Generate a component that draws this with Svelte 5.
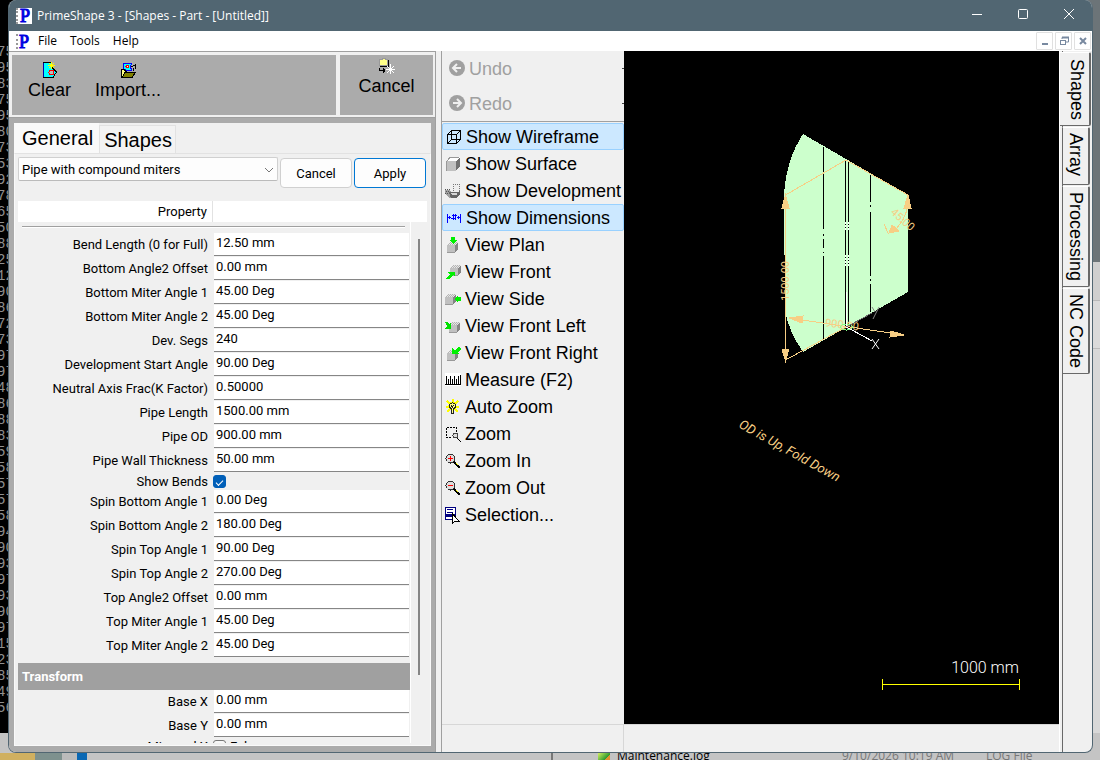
<script>
    const consoleLines = [
        "75", "95", "83", "75", "95", "80", "73", "53", "92", "78", "65", "50", "88", "25",
        "12", "90", "86", "72", "73", "97", "97", "48", "86", "88", "83", "59", "58", "57",
        "57", "58", "94", "90", "93", "97", "93", "90", "97", "15", "23", "85", "49", "56",
    ];

    let shapeRows = $state([
        { label: "Bend Length (0 for Full)", value: "12.50 mm" },
        { label: "Bottom Angle2 Offset", value: "0.00 mm" },
        { label: "Bottom Miter Angle 1", value: "45.00 Deg" },
        { label: "Bottom Miter Angle 2", value: "45.00 Deg" },
        { label: "Dev. Segs", value: "240" },
        { label: "Development Start Angle", value: "90.00 Deg" },
        { label: "Neutral Axis Frac(K Factor)", value: "0.50000" },
        { label: "Pipe Length", value: "1500.00 mm" },
        { label: "Pipe OD", value: "900.00 mm" },
        { label: "Pipe Wall Thickness", value: "50.00 mm" },
        { label: "Show Bends", checked: true },
        { label: "Spin Bottom Angle 1", value: "0.00 Deg" },
        { label: "Spin Bottom Angle 2", value: "180.00 Deg" },
        { label: "Spin Top Angle 1", value: "90.00 Deg" },
        { label: "Spin Top Angle 2", value: "270.00 Deg" },
        { label: "Top Angle2 Offset", value: "0.00 mm" },
        { label: "Top Miter Angle 1", value: "45.00 Deg" },
        { label: "Top Miter Angle 2", value: "45.00 Deg" },
    ]);

    let transformRows = $state([
        { label: "Base X", value: "0.00 mm" },
        { label: "Base Y", value: "0.00 mm" },
        { label: "Mirrored X", checked: false, text: "False" },
    ]);

    let viewItems = $state([
        { icon: "wire", label: "Show Wireframe", on: true },
        { icon: "surface", label: "Show Surface" },
        { icon: "develop", label: "Show Development" },
        { icon: "dims", label: "Show Dimensions", on: true },
        { icon: "plan", label: "View Plan" },
        { icon: "front", label: "View Front" },
        { icon: "side", label: "View Side" },
        { icon: "frontleft", label: "View Front Left" },
        { icon: "frontright", label: "View Front Right" },
        { icon: "measure", label: "Measure (F2)" },
        { icon: "bulb", label: "Auto Zoom" },
        { icon: "zoom", label: "Zoom" },
        { icon: "zoomin", label: "Zoom In" },
        { icon: "zoomout", label: "Zoom Out" },
        { icon: "select", label: "Selection..." },
    ]);

    const sideTabs = ["Shapes", "Array", "Processing", "NC Code"];
    let sideTab = $state("Shapes");
    let pageTab = $state("General");
</script>

{#snippet cube(x, y)}
    <g transform="translate({x} {y})">
        <path d="M0 3L3 0H11L8 3Z" fill="#e6e6e6" />
        <path d="M1 2.5H9M2 1.5H10M3 .5H11" stroke="#b4b4b4" stroke-dasharray="1 1" />
        <path d="M0 3H8V10H0Z" fill="#c0c0c0" />
        <path d="M8 3L11 0V7L8 10Z" fill="#848484" />
        <path d="M0 10.5H8" stroke="#9a9a9a" />
    </g>
{/snippet}

{#snippet lens(sign)}
    <path d="M9 9L15 15" stroke="#000" stroke-width="2" />
    <path d="M11 10L13 12" stroke="#ff0" />
    <circle cx="5.5" cy="5.5" r="4.5" fill="#ddd" stroke="#333" />
    <path d="M3 5.5H8" stroke="#f00" />
    {#if sign === "+"}<path d="M5.5 3V8" stroke="#f00" />{/if}
{/snippet}

{#snippet icon(name)}
    <svg class="icon" viewBox="0 0 16 16" shape-rendering="crispEdges" aria-hidden="true">
        {#if name === "wire"}
            <path
                d="M1.5 5.5H10.5V14.5H1.5ZM5.5 1.5H14.5V10.5H5.5ZM1.5 5.5L5.5 1.5M10.5 5.5L14.5 1.5M1.5 14.5L5.5 10.5M10.5 14.5L14.5 10.5"
                fill="none"
                stroke="#000"
            />
        {:else if name === "surface"}
            <path d="M1 5L5 1H15L11 5Z" fill="#fff" />
            <path d="M1 5H11V15H1Z" fill="#c0c0c0" />
            <path d="M11 5L15 1V10L11 15Z" fill="#707070" />
            <path d="M1.5 15V5.5L5 1.5H14" fill="none" stroke="#999" />
        {:else if name === "develop"}
            <path d="M8.5 8V1.5H14.5V8" fill="#eee" stroke="#777" stroke-dasharray="1 1" />
            <path d="M0 7H4L6 9H9V13L7 15H5L0 11Z" fill="#a0a0a0" />
            <path d="M4 9H13L15 7V11L11 15H6Z" fill="#666" />
            <path d="M5 10H12V12H7Z" fill="#d8d8d8" />
            <path d="M0 6.5H5M1 8.5H5M0 10.5H4" stroke="#555" stroke-dasharray="1 1" />
        {:else if name === "dims"}
            <path
                d="M1.5 4V13M14.5 4V13M2 7.5H5M11 7.5H14M3.5 6V9M12.5 6V9M6 5.5H11M5 8.5H10M7.5 4V10M9.5 4V10"
                stroke="#00f"
                fill="none"
            />
        {:else if name === "plan"}
            {@render cube(2, 5)}
            <path d="M6 0H10V3H12L8 7L4 3H6Z" fill="#00f000" />
        {:else if name === "front"}
            {@render cube(5, 1)}
            <path d="M2 8H10V13L8 11L4 15H0L5 10Z" fill="#00f000" />
        {:else if name === "side"}
            {@render cube(0, 3)}
            <path d="M9 8L13 4V6H16V10H13V12Z" fill="#00f000" />
        {:else if name === "frontleft"}
            {@render cube(4, 4)}
            <path d="M0 4H2L4 6L6 4V11H0L2 8Z" fill="#00e000" />
        {:else if name === "frontright"}
            {@render cube(2, 5)}
            <path d="M15 2L16 4L13 7L14 9H7V3L10 5L13 2Z" fill="#00f000" />
        {:else if name === "measure"}
            <path d="M0 1H16V14H0Z" fill="#fff" />
            <path
                d="M0 12.5H16M1.5 4V12M3.5 7V12M5.5 4V12M7.5 7V12M9.5 4V12M11.5 7V12M13.5 4V12M15.5 3V12"
                stroke="#000"
            />
        {:else if name === "bulb"}
            <path
                d="M7.5 0V14M1 7.5H14M2 2L13 13M13 2L2 13"
                stroke="#ff0"
                stroke-width="2"
            />
            <circle cx="7.5" cy="6.5" r="4" fill="#ff0" />
            <path d="M7.5 3.5L10.5 5.5V8L8.5 10V14H6.5V10L4.5 8V5.5Z" fill="#ff8" stroke="#222" />
            <path d="M6 6L7.5 8L9 6" fill="none" stroke="#222" />
        {:else if name === "zoom"}
            <path
                d="M1.5 1.5H11.5V7M1.5 1.5V11.5H7"
                fill="none"
                stroke="#000"
                stroke-dasharray="2 1"
            />
            <circle cx="10.5" cy="9.5" r="2.5" fill="#ddd" stroke="#444" />
            <path d="M12 12L16 16" stroke="#000" />
        {:else if name === "zoomin"}
            {@render lens("+")}
        {:else if name === "zoomout"}
            {@render lens("-")}
        {:else if name === "select"}
            <path d="M.5 .5H10.5V12.5H.5Z" fill="#fff" stroke="#000080" />
            <path d="M2 2.5H8M2 5.5H8" stroke="#000080" />
            <path d="M1 7H10V10H1Z" fill="#000080" />
            <path d="M7.5 7L14.5 14.5H10L7.5 16Z" fill="#fff" stroke="#000" />
        {/if}
    </svg>
{/snippet}

{#snippet field(row, id)}
    <div class="row" class:check-row={row.value === undefined}>
        <label for={id}>{row.label}</label>
        {#if row.value === undefined}
            <div class="check-cell">
                <input {id} type="checkbox" bind:checked={row.checked} />
                {#if row.text}<span>{row.text}</span>{/if}
            </div>
        {:else}
            <input {id} type="text" bind:value={row.value} />
        {/if}
    </div>
{/snippet}

<div class="desktop">
    <div class="console" aria-hidden="true">
        {#each consoleLines as line}<div>{line}</div>{/each}
    </div>
    <div class="backdrop"></div>
    <div class="explorer">
        <span class="thumbs"></span>
        <span class="splitter"></span>
        <span class="file-icon"></span>
        <span class="file-name">Maintenance.log</span>
        <span class="file-date">9/10/2026 10:19 AM</span>
        <span class="file-kind">LOG File</span>
    </div>

    <div class="window">
        <header class="titlebar">
            <span class="logo">P</span>
            <h1>PrimeShape 3 - [Shapes - Part - [Untitled]]</h1>
            <button aria-label="Minimize">
                <svg viewBox="0 0 12 12"><path d="M1 6.5H11" /></svg>
            </button>
            <button aria-label="Maximize">
                <svg viewBox="0 0 12 12"><rect x="1.5" y="1.5" width="9" height="9" rx="1" /></svg>
            </button>
            <button aria-label="Close">
                <svg viewBox="0 0 12 12"><path d="M1 1L11 11M11 1L1 11" /></svg>
            </button>
        </header>

        <nav class="menubar">
            <span class="logo">P</span>
            <button>File</button>
            <button>Tools</button>
            <button>Help</button>
            <div class="mdi">
                <button aria-label="Minimize document">
                    <svg viewBox="0 0 12 12"><path d="M3 9H9" stroke-width="2" /></svg>
                </button>
                <button aria-label="Restore document">
                    <svg viewBox="0 0 12 12">
                        <path d="M4 4V2.5H10.5V7H8" />
                        <path d="M4 2.5H11" stroke-width="2" />
                        <rect x="2.5" y="5.5" width="5" height="4" />
                    </svg>
                </button>
                <button aria-label="Close document">
                    <svg viewBox="0 0 12 12"><path d="M3 3L9 9M9 3L3 9" stroke-width="2" /></svg>
                </button>
            </div>
        </nav>

        <main>
            <section class="editor">
                <div class="actions">
                    <div class="action-group wide">
                        <button>
                            <svg class="icon" viewBox="0 0 16 16" shape-rendering="crispEdges" aria-hidden="true">
                                <path d="M1.5 .5H9.5V5L14.5 10L11 15.5H1.5Z" fill="#0ff" stroke="#000" />
                                <path d="M1.5 1V15" stroke="#00a" />
                                <path d="M9.5 0V7M6 3.5H13M7 1L12 6M12 1L7 6" stroke="#ff0" />
                                <circle cx="9.5" cy="10.5" r="2.5" fill="#bbb" stroke="#f00" />
                            </svg>
                            <span>Clear</span>
                        </button>
                        <button>
                            <svg class="icon" viewBox="0 0 16 16" shape-rendering="crispEdges" aria-hidden="true">
                                <path d="M3 1H12L10 5L12 8L8 9L4 7Z" fill="#0ff" stroke="#00f" />
                                <circle cx="7.5" cy="4.5" r="1.5" fill="#fff" stroke="#f00" />
                                <path d="M11 5L15 3V7M13 9V6" fill="none" stroke="#000" />
                                <path d="M1.5 15V7.5H4L7 10.5H12V15Z" fill="#ff8" stroke="#000" />
                                <path d="M2 15.5L5 10.5H15.5L12 15.5Z" fill="#808000" stroke="#000" />
                            </svg>
                            <span>Import...</span>
                        </button>
                    </div>
                    <div class="action-group">
                        <button>
                            <svg class="icon" viewBox="0 0 16 16" shape-rendering="crispEdges" aria-hidden="true">
                                <path d="M.5 1.5H3.5V.5H6.5V1.5H8.5V7.5H.5Z" fill="#ff8" stroke="#999" />
                                <path d="M9.5 2V8.5H1" fill="none" stroke="#000" />
                                <path d="M.5 10V12.5H4M4.5 10V15M5.5 11V14" fill="none" stroke="#000" />
                                <path d="M11.5 6V16M7 11.5H16M8 8L15 15M15 8L8 15" stroke="#fff" />
                            </svg>
                            <span>Cancel</span>
                        </button>
                    </div>
                </div>

                <div class="frame">
                    <div class="page-tabs" role="tablist">
                        {#each ["General", "Shapes"] as tab}
                            <button
                                role="tab"
                                aria-selected={pageTab === tab}
                                class:current={pageTab === tab}
                                onclick={() => (pageTab = tab)}>{tab}</button
                            >
                        {/each}
                    </div>
                    <div class="page">
                        <div class="chooser">
                            <div class="select-wrap">
                                <select aria-label="Shape">
                                    <option>Pipe with compound miters</option>
                                </select>
                                <svg viewBox="0 0 10 6" aria-hidden="true"><path d="M1 1L5 5L9 1" /></svg>
                            </div>
                            <button>Cancel</button>
                            <button class="default">Apply</button>
                        </div>

                        <div class="grid-head"><span>Property</span></div>
                        <div class="grid-body">
                            <div class="fields">
                                <hr />
                                {#each shapeRows as row, i}
                                    {@render field(row, `shape-${i}`)}
                                {/each}
                                <h2>Transform</h2>
                                {#each transformRows as row, i}
                                    {@render field(row, `transform-${i}`)}
                                {/each}
                            </div>
                            <div class="scroll"><div class="thumb"></div></div>
                        </div>
                    </div>
                </div>
            </section>

            <section class="viewer">
                <div class="viewer-main">
                    <div class="toolbar">
                        <button class="history" disabled>
                            <svg class="icon" viewBox="0 0 16 16" aria-hidden="true">
                                <circle cx="8" cy="7" r="8" fill="#a0a0a0" />
                                <path d="M12 7H4M8 3L4 7L8 11" fill="none" stroke="#f0f0f0" stroke-width="2" />
                            </svg>
                            <span>Undo</span>
                            <i></i>
                        </button>
                        <button class="history" disabled>
                            <svg class="icon" viewBox="0 0 16 16" aria-hidden="true">
                                <circle cx="8" cy="7" r="8" fill="#a0a0a0" />
                                <path d="M4 7H12M8 3L12 7L8 11" fill="none" stroke="#f0f0f0" stroke-width="2" />
                            </svg>
                            <span>Redo</span>
                            <i></i>
                        </button>
                        <hr />
                        {#each viewItems as item}
                            <button class="view-item" class:on={item.on} onclick={() => (item.on = !item.on)}>
                                {@render icon(item.icon)}
                                {item.label}
                            </button>
                        {/each}
                    </div>

                    <div class="canvas">
                        <svg viewBox="624 51 435 673" shape-rendering="crispEdges">
                            <path
                                d="M803 134L908 195V292L803 352Q788 330 785 310L784 195Q786 160 803 134Z"
                                fill="#ccffcc"
                            />
                            <g stroke="#000" fill="none">
                                <path d="M823.5 147V229M823.5 234V236M823.5 239V248M823.5 252V253M823.5 256V339" />
                                <path d="M845.5 161V326M848.5 161V326" />
                                <path d="M870.5 175V202M870.5 205V207M870.5 212V276M870.5 279V281M870.5 284V312" />
                            </g>
                            <g stroke="#fff" fill="none" stroke-dasharray="2 1">
                                <path d="M845.5 222V231M848.5 222V231M845.5 255V266M848.5 255V266" />
                            </g>
                            <g class="dim">
                                <path d="M785.5 195V360L846 327M785.5 195L846 160L908 195" />
                                <path d="M785.5 195L789 208H782Z" class="tip" />
                                <path d="M785.5 361L789 349H782Z" class="tip" />
                                <path d="M908 195L911 208H904Z" class="tip" />
                                <path d="M908 195Q910 216 893 232M884 224L888 233" />
                                <path d="M889 233L892 225L899 231Z" class="tip" />
                                <path d="M789 318L904 335" />
                                <path d="M789 318L803 316L802 323Z" class="tip" />
                                <path d="M904 335L890 337L891 331Z" class="tip" />
                            </g>
                            <g class="dim-text">
                                <text transform="translate(789 301) rotate(-90)">1500.00</text>
                                <text transform="translate(822 326) rotate(7)">&nbsp;900.00</text>
                                <text transform="translate(890 213) rotate(42)">45.00</text>
                            </g>
                            <ellipse cx="846.5" cy="327" rx="6" ry="3" fill="none" stroke="#8f8" />
                            <path d="M846.5 326V292M846.5 327L872 341" stroke="#fff" />
                            <path d="M846.5 327L872 313" stroke="#666" />
                            <path d="M872 339L879 349M879 339L872 349" stroke="#fff" shape-rendering="auto" />
                            <path d="M872 307L875 312M879 307L873 319" stroke="#888" shape-rendering="auto" />
                            <text class="note" transform="translate(738 427) rotate(29)">OD is Up, Fold Down</text>
                            <text class="scale-text" x="1019" y="673" text-anchor="end">1000 mm</text>
                            <path d="M882.5 679V690M1019.5 679V690M882 684.5H1020" stroke="#ff0" />
                        </svg>
                    </div>
                </div>
                <footer class="status"><span></span></footer>
            </section>

            <div class="side-tabs" role="tablist">
                {#each sideTabs as tab}
                    <button
                        role="tab"
                        aria-selected={sideTab === tab}
                        class:current={sideTab === tab}
                        onclick={() => (sideTab = tab)}>{tab}</button
                    >
                {/each}
            </div>
        </main>
    </div>
</div>

<style>
    :global(body) {
        margin: 0;
        background: #d2d2d2;
    }

    * {
        box-sizing: border-box;
    }

    button,
    input,
    select {
        margin: 0;
        padding: 0;
        border: none;
        background: none;
        font: inherit;
        color: inherit;
    }

    .desktop {
        position: relative;
        height: 100vh;
        padding: 0 7px 7px 8px;
        overflow: hidden;
        font-family: Roboto, "Liberation Sans", sans-serif;
        font-size: 13px;
        color: #000;
    }

    .console {
        position: absolute;
        inset: 0 auto 27px 0;
        width: 20px;
        padding-top: 44px;
        overflow: hidden;
        background: #000;
        color: #909090;
        font: 14px/16px "Liberation Mono", monospace;
        text-indent: -3px;
    }

    .backdrop {
        position: absolute;
        inset: 0 0 0 auto;
        width: 20px;
        background: linear-gradient(#6c7478 0 262px, #cfcfcf 262px 300px, #b8b8b8 300px 301px, #dadada 301px 348px, #bbb 348px 349px, #d8d8d8 349px);
    }

    .explorer {
        position: absolute;
        inset: auto 0 0 0;
        height: 27px;
        display: flex;
        align-items: flex-end;
        background: #c4c4c4;
        font: 12px/12px "Open Sans", sans-serif;
        white-space: nowrap;
    }

    .thumbs {
        width: 87px;
        height: 7px;
        background: linear-gradient(90deg, #d0b060 0 35px, #7e918e 35px 62px, #bbb 62px 77px, #0a68b4 77px);
    }

    .splitter {
        width: 2px;
        height: 7px;
        margin-left: 464px;
        background: #777;
    }

    .file-icon {
        width: 12px;
        height: 7px;
        margin: 0 7px 0 45px;
        background: linear-gradient(135deg, #d8f060, #2c9a30 70%, #e09030 70%);
    }

    .file-name {
        width: 225px;
    }

    .file-date {
        width: 144px;
        color: #777;
    }

    .file-kind {
        color: #777;
    }

    .explorer span:nth-child(n + 4) {
        height: 10px;
    }

    .window {
        position: relative;
        height: 100%;
        display: flex;
        flex-direction: column;
        overflow: hidden;
        border: solid #516672;
        border-width: 0 1px 1px;
        border-radius: 8px;
        background: #f0f0f0;
    }

    .titlebar {
        display: flex;
        align-items: center;
        height: 31px;
        flex: none;
        padding-left: 7px;
        background: #516672;
        color: #fff;
    }

    .logo {
        width: 16px;
        height: 16px;
        border-left: 2px dotted #999;
        background: #fff;
        color: #0000e0;
        font: 18px/16px "Liberation Serif", serif;
        -webkit-text-stroke: 1px #0000e0;
        text-align: center;
    }

    h1 {
        flex: 1;
        margin: 0;
        padding-left: 5px;
        font: 12px/16px "Open Sans", sans-serif;
    }

    .titlebar button {
        width: 46px;
        height: 31px;
    }

    .titlebar svg {
        width: 12px;
        height: 12px;
        fill: none;
        stroke: #fff;
    }

    .menubar {
        display: flex;
        align-items: center;
        height: 20px;
        flex: none;
        gap: 13px;
        padding: 0 1px 0 7px;
        background: #fff;
        font: 12px/16px "Open Sans", sans-serif;
    }

    .menubar .logo {
        width: 14px;
        height: 15px;
        margin-right: -5px;
    }

    .mdi {
        display: flex;
        gap: 2px;
        margin-left: auto;
    }

    .mdi button {
        display: grid;
        place-items: center;
        width: 17px;
        height: 18px;
        border: 1px solid #e0e0e0;
        border-radius: 1px;
    }

    .mdi svg {
        width: 12px;
        height: 12px;
        fill: none;
        stroke: #7889a0;
    }

    main {
        flex: 1;
        min-height: 0;
        display: flex;
    }

    .icon {
        width: 16px;
        height: 16px;
        flex: none;
        overflow: visible;
    }

    .editor {
        width: 427px;
        flex: none;
        display: flex;
        flex-direction: column;
        border-top: 1px solid #a0a0a0;
        border-right: 1px solid #a0a0a0;
    }

    .actions {
        display: flex;
        gap: 4px;
        height: 66px;
        flex: none;
        padding: 3px 2px 2px 3px;
        border-bottom: 1px solid #a0a0a0;
        font: 18px/20px "Liberation Sans", Arial, sans-serif;
    }

    .action-group {
        display: flex;
        align-items: flex-start;
        gap: 24px;
        width: 93px;
        background: #ababab;
    }

    .action-group button {
        flex: 1;
        display: flex;
        flex-direction: column;
        align-items: center;
        padding-top: 3px;
        gap: 2px;
    }

    .action-group.wide {
        flex: 1;
        padding-left: 16px;
    }

    .wide button {
        flex: none;
        padding-top: 7px;
    }

    .frame {
        flex: 1;
        min-height: 0;
        display: flex;
        flex-direction: column;
        border: solid #ababab;
        border-width: 5px 4px 6px 5px;
    }

    .page-tabs {
        display: flex;
        align-items: flex-end;
        height: 30px;
        flex: none;
        font: 20px/22px "Liberation Sans", Arial, sans-serif;
    }

    .page-tabs button {
        height: 28px;
        padding: 0 3px 0 4px;
        border: 1px solid #e2e2e2;
        border-bottom: none;
        background: #f3f3f3;
    }

    .page-tabs .current {
        height: 30px;
        padding: 0 6px 0 8px;
        border: none;
        background: #f9f9f9;
    }

    .page {
        flex: 1;
        min-height: 0;
        display: flex;
        flex-direction: column;
        padding: 3px 3px 2px 3px;
        border: 1px solid #f9f9f9;
        border-top-color: #e2e2e2;
    }

    .chooser {
        display: flex;
        gap: 2px;
        height: 44px;
        flex: none;
        padding-right: 1px;
    }

    .select-wrap {
        position: relative;
        flex: 1;
    }

    select {
        appearance: none;
        width: 100%;
        height: 24px;
        padding: 0 24px 0 3px;
        border: 1px solid #d0d0d0;
        border-bottom-color: #bbb;
        border-radius: 2px;
        background: #fdfdfd;
    }

    .select-wrap svg {
        position: absolute;
        right: 4px;
        top: 10px;
        width: 10px;
        height: 6px;
        fill: none;
        stroke: #777;
    }

    .chooser button {
        width: 72px;
        height: 30px;
        margin-top: 1px;
        border: 1px solid #d0d0d0;
        border-radius: 4px;
        background: #fdfdfd;
    }

    .chooser .default {
        border-color: #0078d4;
    }

    .grid-head {
        height: 21px;
        flex: none;
        background: #fff;
        line-height: 21px;
    }

    .grid-head span {
        display: block;
        width: 195px;
        padding-right: 5px;
        border-right: 1px solid #e2e2e2;
        text-align: right;
    }

    .grid-body {
        flex: 1;
        min-height: 0;
        display: flex;
    }

    .fields {
        flex: 1;
        min-width: 0;
        overflow: hidden;
    }

    hr {
        margin: 0;
        border: none;
        border-top: 1px solid #a0a0a0;
    }

    .fields hr {
        margin: 4px 5px 5px 4px;
        border-bottom: 1px solid #fff;
    }

    .row {
        display: grid;
        grid-template-columns: 196px 1fr;
        height: 24px;
        padding-right: 1px;
    }

    .row label {
        padding-right: 6px;
        line-height: 24px;
        text-align: right;
    }

    .row input[type="text"] {
        width: 100%;
        height: 23px;
        min-width: 0;
        padding: 0 2px 3px;
        border-bottom: 1px solid #868686;
        background: #fff;
    }

    .check-row {
        height: 17px;
    }

    .check-row label {
        line-height: 17px;
    }

    .check-cell {
        display: flex;
        align-items: center;
        gap: 4px;
    }

    .check-cell input {
        appearance: none;
        width: 13px;
        height: 13px;
        margin-left: -1px;
        border: 1px solid #777;
        border-radius: 3px;
        background: #f7f7f7;
    }

    .check-cell input:checked {
        display: grid;
        place-items: center;
        border-color: #005fb8;
        background: #005fb8;
    }

    .check-cell input:checked::after {
        content: "";
        width: 6px;
        height: 3px;
        border: solid #fff;
        border-width: 0 0 1px 1px;
        transform: rotate(-45deg);
    }

    h2 {
        margin: 5px 0 0;
        padding-left: 4px;
        background: #a0a0a0;
        color: #fff;
        font-size: 13px;
        font-weight: bold;
        line-height: 27px;
    }

    .scroll {
        width: 17px;
        border-left: 1px solid #fff;
        padding: 17px 0 68px 7px;
    }

    .thumb {
        width: 2px;
        height: 100%;
        background: #868686;
    }

    .viewer {
        flex: 1;
        min-width: 0;
        display: flex;
        flex-direction: column;
        margin-left: 5px;
        border-left: 1px solid #a0a0a0;
    }

    .viewer-main {
        flex: 1;
        min-height: 0;
        display: flex;
    }

    .toolbar {
        width: 182px;
        flex: none;
        font: 18px/20px "Liberation Sans", Arial, sans-serif;
    }

    .toolbar button {
        display: flex;
        align-items: center;
        width: 100%;
        text-align: left;
        white-space: nowrap;
    }

    .toolbar .history {
        height: 35px;
        gap: 4px;
        padding-left: 7px;
        color: #a0a0a0;
    }

    .history i {
        width: 2px;
        height: 1px;
        margin-left: auto;
        background: #444;
    }

    .toolbar hr {
        margin-bottom: 1px;
    }

    .toolbar .view-item {
        height: 27px;
        gap: 4px;
        padding-left: 3px;
    }

    .toolbar .on {
        border: 1px solid #99d1ff;
        border-radius: 2px;
        background: #cce8ff;
    }

    .canvas {
        flex: 1;
        min-width: 0;
        background: #000;
    }

    .canvas svg {
        display: block;
        width: 100%;
        height: 100%;
    }

    .dim {
        fill: none;
        stroke: #f7ce84;
    }

    .dim .tip {
        fill: #f7ce84;
    }

    .dim-text,
    .note {
        fill: #f7ce84;
        font: 11px Roboto, sans-serif;
    }

    .note {
        font-size: 13px;
        font-style: italic;
    }

    .scale-text {
        fill: #fff;
        font: 300 16px Roboto, sans-serif;
    }

    .status {
        display: flex;
        height: 28px;
        flex: none;
        border-top: 1px solid #d7d7d7;
    }

    .status span {
        width: 182px;
        border-right: 1px solid #d7d7d7;
    }

    .side-tabs {
        width: 33px;
        flex: none;
        display: flex;
        flex-direction: column;
        align-items: flex-start;
        gap: 1px;
        padding-top: 1px;
        border-left: 1px solid #fff;
        background: linear-gradient(90deg, transparent 2px, #696969 2px 3px, transparent 3px);
        font: 18px/20px "Liberation Sans", Arial, sans-serif;
    }

    .side-tabs button {
        writing-mode: vertical-rl;
        width: 28px;
        min-height: 58px;
        margin-left: 2px;
        padding: 5px 0;
        border: 1px solid #696969;
        border-top-color: #fff;
        border-right-width: 2px;
        border-radius: 0 2px 2px 0;
        background: #f0f0f0;
        text-align: left;
        white-space: nowrap;
    }

    .side-tabs .current {
        width: 31px;
        margin-left: 0;
        padding: 6px 0 5px 5px;
        border-left: none;
    }
</style>
